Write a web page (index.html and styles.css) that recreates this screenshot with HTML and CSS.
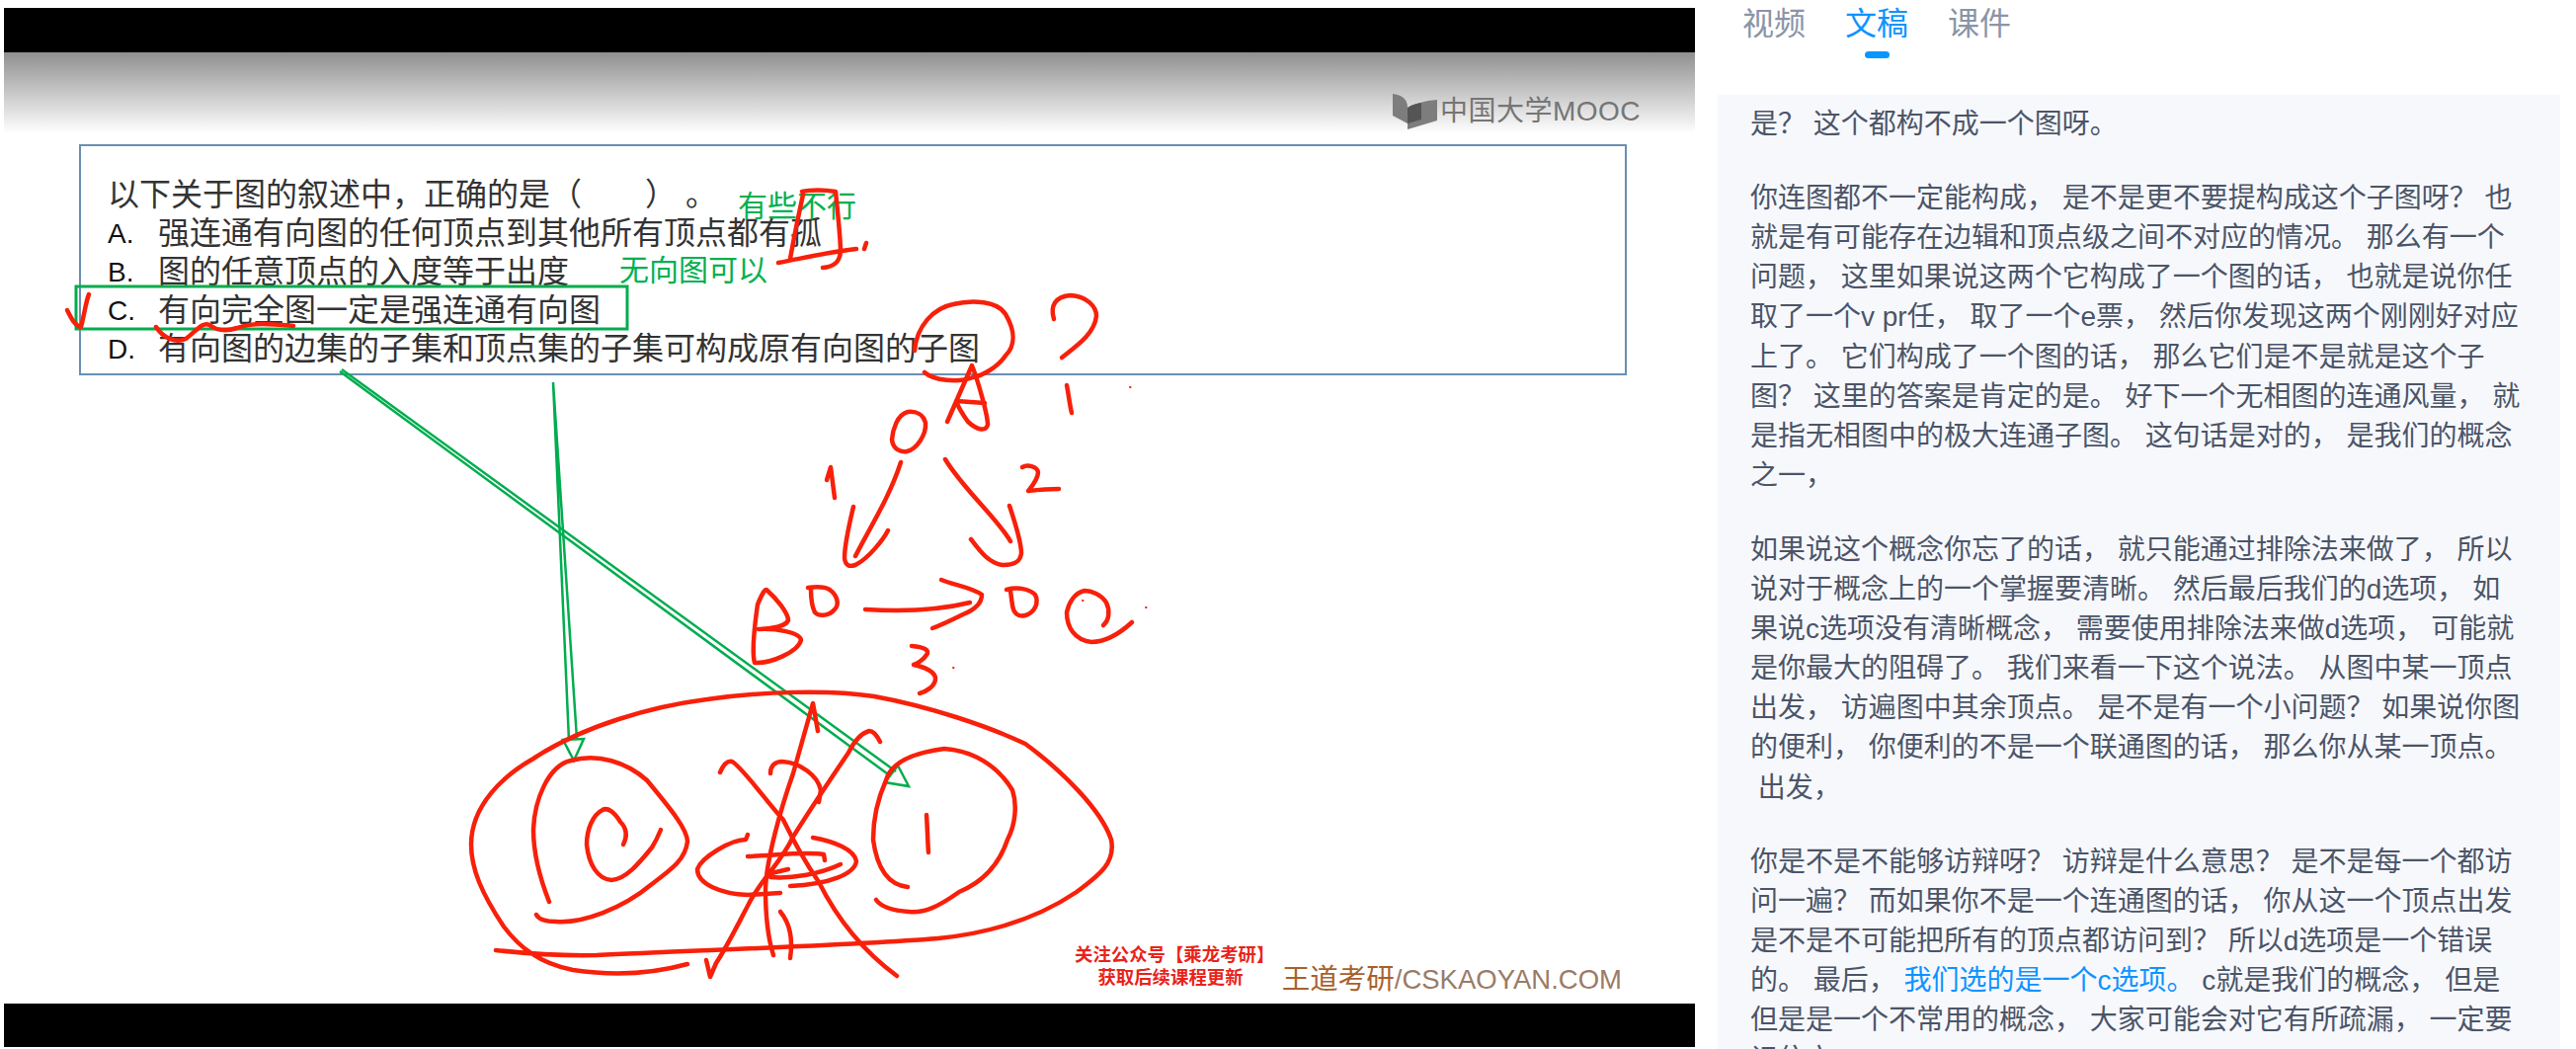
FILE: index.html
```html
<!DOCTYPE html>
<html lang="zh-CN">
<head>
    <meta charset="UTF-8">
    <meta name="viewport" content="width=device-width, initial-scale=1.0">
    <title>文稿</title>
    <link rel="stylesheet" href="styles.css">
</head>
<body>
    <div class="player">
        <div class="video">
            <div class="bar-top"></div>
            <div class="stage">
                <div class="question">
                    <p class="stem">以下关于图的叙述中，正确的是（&emsp;&emsp;）&nbsp;。</p>
                    <p class="option"><span class="option-key">A.</span>强连通有向图的任何顶点到其他所有顶点都有孤</p>
                    <p class="option"><span class="option-key">B.</span>图的任意顶点的入度等于出度</p>
                    <p class="option"><span class="option-key">C.</span>有向完全图一定是强连通有向图</p>
                    <p class="option"><span class="option-key">D.</span>有向图的边集的子集和顶点集的子集可构成原有向图的子图</p>
                </div>
            </div>
            <div class="bar-bottom"></div>

            <div class="logo">
                <svg class="logo-icon" width="45" height="36" viewBox="0 0 45 36">
                    <path d="M0 0 C8 1 15 4 15 14 L15 30 L0 22 Z" fill="#7d7d7d"/>
                    <path d="M15 14 C22 10 32 7 45 6 L45 27 L15 36 Z" fill="#7d7d7d"/>
                    <path d="M15 14 C18 12 22 10 29 9 L29 26 L15 30 Z" fill="#555"/>
                </svg>
                <span class="logo-text">中国大学MOOC</span>
            </div>

            <div class="note note-some">有些不行</div>
            <div class="note note-undirected">无向图可以</div>

            <div class="promo">关注公众号【乘龙考研】<br>获取后续课程更新</div>
            <div class="site"><span class="site-name">王道考研</span>/CSKAOYAN.COM</div>

            <svg class="ink" width="1712" height="1052" viewBox="4 8 1712 1052">
                <g class="ink-green">
                    <rect x="77" y="290" width="558" height="43"/>
                    <path class="thin" d="M344 376 L902 786 M346 374 L907 781 M909 775 L920 796 L896 792 Z"/>
                    <path class="thin" d="M560 387 L576 750 M560 387 L584 748 M570 749 L581 770 L591 748 Z"/>
                </g>
                <g class="ink-red">
                    <!-- marks on the options -->
                    <path d="M813 197 C808 220 803 245 800 262 M812 194 C820 192 835 192 846 194 C848 215 851 240 851 255 C850 265 845 270 833 271 M788 266 C810 262 840 255 867 252 M875 252 L877 246"/>
                    <path d="M68 314 C72 322 76 330 82 331 C85 320 87 305 90 298"/>
                    <path d="M158 331 C165 342 178 348 188 343 C198 336 205 325 212 329 C220 335 228 336 240 332 C255 326 275 328 297 330"/>
                    <path d="M926 355 C928 330 945 312 965 308 C985 303 1010 305 1018 318 C1028 335 1028 350 1018 360 C1010 372 995 380 985 382 C970 388 945 385 936 377"/>
                    <path d="M1067 323 C1063 310 1068 300 1084 299 C1100 300 1110 310 1110 320 C1108 338 1090 350 1075 362"/>
                    <path d="M1080 390 C1082 400 1083 410 1085 418"/>

                    <!-- small graph -->
                    <path d="M959 427 L984 370 C990 385 1000 420 1000 430 C998 437 990 436 980 427 C975 420 970 412 968 406 L997 408"/>
                    <path d="M919 417 C908 420 904 435 903 445 C904 455 912 458 918 457 C928 455 938 440 937 428 C935 420 928 416 919 417 Z"/>
                    <path d="M837 486 L841 473 L845 504"/>
                    <path d="M912 468 C900 505 880 535 866 563 M864 513 C860 530 855 550 855 565 C856 573 860 574 866 572 C880 565 895 545 899 537"/>
                    <path d="M957 465 C975 495 1010 525 1023 548 M1022 512 C1028 530 1034 550 1034 560 C1033 570 1025 572 1015 572 C1000 570 990 555 983 546"/>
                    <path d="M1035 473 C1040 470 1050 472 1051 478 C1051 485 1045 492 1041 497 C1050 496 1060 495 1072 495"/>
                    <path d="M767 612 C763 640 761 660 764 671 C780 672 808 660 811 648 C810 640 785 636 768 637 C780 636 795 635 798 628 C798 620 785 605 777 598 C775 595 772 600 767 612"/>
                    <path d="M818 595 C825 594 835 594 840 597 C848 603 850 612 845 617 C840 623 830 625 825 620 C821 612 821 604 821 597"/>
                    <path d="M876 617 C910 619 950 618 982 610 M953 587 C965 592 985 595 994 602 C994 612 985 618 975 622 C965 627 955 632 944 636"/>
                    <path d="M1019 597 C1030 594 1042 596 1048 602 C1052 610 1048 620 1038 623 C1030 625 1026 620 1025 613 L1023 598"/>
                    <path d="M1117 633 C1123 628 1124 618 1120 610 C1115 602 1105 598 1098 598 C1088 600 1082 610 1080 620 C1080 635 1088 648 1105 650 C1120 650 1135 640 1146 630"/>
                    <path d="M923 654 C935 655 942 658 938 663 C935 668 928 672 925 673 C935 675 948 680 947 688 C946 695 938 700 931 702"/>

                    <!-- big loop -->
                    <path d="M696 976 C660 986 620 988 580 982 C545 975 525 958 510 938 C488 905 477 880 477 855 C477 815 510 785 540 768 C590 735 660 715 716 708 C770 700 840 698 885 705 C940 715 1000 735 1038 753 C1075 780 1115 820 1125 850 C1130 875 1110 888 1090 903 C1050 930 1000 945 950 950 C850 958 700 962 604 967 C560 968 530 965 502 962"/>
                    <path d="M556 913 C545 885 540 860 540 840 C541 810 555 775 578 770 C605 762 635 772 655 790 C680 820 696 840 696 852 C694 870 680 880 660 895 C630 920 590 935 563 933 C552 933 545 930 543 926"/>
                    <path d="M631 855 C636 845 634 838 628 832 C622 822 615 817 610 820 C600 825 594 840 594 855 C596 875 605 890 619 891 C635 890 650 870 660 858 C665 850 667 845 669 840"/>
                    <path d="M919 898 C900 896 888 880 884 850 C884 830 888 810 897 790 C902 772 925 762 956 758 C985 760 1010 775 1025 800 C1030 815 1028 835 1020 850 C1010 880 990 895 971 903 C950 918 935 925 920 923 C905 922 892 918 887 911"/>
                    <path d="M938 825 C939 838 939 850 940 863"/>

                    <!-- crossed out middle node -->
                    <path d="M729 782 C732 775 736 770 741 771 C750 775 775 810 793 830 C810 865 820 880 829 893 C845 925 870 960 908 988"/>
                    <path d="M891 751 C888 745 884 740 880 740 C873 742 865 750 859 762 C840 790 820 820 803 847 C790 875 770 890 757 917 C745 940 735 960 725 975 L719 989 L715 972"/>
                    <path d="M783 967 C776 945 775 920 775 900 C776 870 790 820 803 783 L823 712 L828 740"/>
                    <path d="M780 783 C780 775 785 771 792 771 C810 772 828 785 831 800 L829 812"/>
                    <path d="M757 845 L755 850 C740 850 710 868 706 880 C706 895 730 905 757 906 L790 904"/>
                    <path d="M823 848 C845 852 865 860 867 872 C865 885 840 895 800 897"/>
                    <path d="M757 867 C785 866 815 862 834 865 L835 871"/>
                    <path d="M780 888 C800 890 830 885 851 875 M777 885 L798 880"/>
                    <path d="M790 923 C800 935 803 950 800 970"/>
                    <path class="dot" d="M1144 392 h.5 M1096 608 h.5 M1160 615 h.5 M965 676 h.5"/>
                </g>
            </svg>
        </div>
    </div>

    <div class="side">
        <div class="tabs">
            <div class="tab">视频</div>
            <div class="tab tab-active">文稿<span class="tab-mark"></span></div>
            <div class="tab">课件</div>
        </div>
        <div class="transcript">
            <div class="transcript-body">
                <p><span class="line-cut">比如说这个边集里面的这条边它连的顶点不在这里， 是不是不对的</span>是？ 这个都构不成一个图呀。</p>
                <p>你连图都不一定能构成， 是不是更不要提构成这个子图呀？ 也<br>就是有可能存在边辑和顶点级之间不对应的情况。 那么有一个<br>问题， 这里如果说这两个它构成了一个图的话， 也就是说你任<br>取了一个v pr任， 取了一个e票， 然后你发现这两个刚刚好对应<br>上了。 它们构成了一个图的话， 那么它们是不是就是这个子<br>图？ 这里的答案是肯定的是。 好下一个无相图的连通风量， 就<br>是指无相图中的极大连通子图。 这句话是对的， 是我们的概念<br>之一，</p>
                <p>如果说这个概念你忘了的话， 就只能通过排除法来做了， 所以<br>说对于概念上的一个掌握要清晰。 然后最后我们的d选项， 如<br>果说c选项没有清晰概念， 需要使用排除法来做d选项， 可能就<br>是你最大的阻碍了。 我们来看一下这个说法。 从图中某一顶点<br>出发， 访遍图中其余顶点。 是不是有一个小问题？ 如果说你图<br>的便利， 你便利的不是一个联通图的话， 那么你从某一顶点。<br>&nbsp;出发，</p>
                <p>你是不是不能够访辩呀？ 访辩是什么意思？ 是不是每一个都访<br>问一遍？ 而如果你不是一个连通图的话， 你从这一个顶点出发<br>是不是不可能把所有的顶点都访问到？ 所以d选项是一个错误<br>的。 最后， <span class="hl">我们选的是一个c选项。</span> c就是我们的概念， 但是<br>但是是一个不常用的概念， 大家可能会对它有所疏漏， 一定要<br>记住它</p>
            </div>
        </div>
    </div>
</body>
</html>
```

FILE: styles.css
```css
* {
    box-sizing: border-box;
}

html, body {
    height: 100%;
}

body {
    margin: 0;
    display: flex;
    overflow: hidden;
    background-color: #fff;
    font-family: "Liberation Sans", "Noto Sans CJK SC", sans-serif;
}

p {
    margin: 0;
}

/* left: video frame */
.player {
    width: 1716px;
    flex-shrink: 0;
    padding: 8px 0 2px 4px;
    height: 1062px;
}

.video {
    position: relative;
    height: 100%;
    display: flex;
    flex-direction: column;
}

.bar-top {
    height: 45px;
    background-color: #000;
}

.bar-bottom {
    height: 44px;
    background-color: #000;
}

.stage {
    flex: 1;
    padding: 93px 0 0 76px;
    background: #fff linear-gradient(#909090, #fff) no-repeat top / 100% 82px;
}

.question {
    width: 1567px;
    height: 234px;
    padding: 30px 0 0 27px;
    border: 2px solid #6a8fb3;
    background-color: #fff;
    color: #333;
    font-size: 32px;
    line-height: 39px;
}

.option {
    display: flex;
    white-space: nowrap;
}

.option-key {
    width: 51px;
    color: #111;
    font-size: 28px;
}

.logo {
    position: absolute;
    top: 87px;
    right: 55px;
    display: flex;
    align-items: center;
    gap: 3px;
}

.logo-text {
    color: #757575;
    font-size: 28px;
    line-height: 36px;
    letter-spacing: 0.5px;
}

.note {
    position: absolute;
    color: #00b050;
    font-size: 30px;
    line-height: 30px;
    white-space: nowrap;
}

.note-some {
    left: 743px;
    top: 186px;
}

.note-undirected {
    left: 623px;
    top: 251px;
}

.promo {
    position: absolute;
    left: 1084px;
    top: 947px;
    width: 194px;
    color: #e9231a;
    font-size: 18.4px;
    font-weight: bold;
    line-height: 23px;
    text-align: center;
    white-space: nowrap;
}

.site {
    position: absolute;
    right: 74px;
    top: 965px;
    color: #9b7b66;
    font-size: 27.5px;
    line-height: 36px;
    white-space: nowrap;
}

.site-name {
    color: #a9602c;
    font-size: 28.5px;
}

/* hand-drawn marks over the slide */
.ink {
    position: absolute;
    left: 0;
    top: 0;
    pointer-events: none;
    fill: none;
}

.ink-green {
    stroke: #00ad4f;
    stroke-width: 3;
}

.ink-green .thin {
    stroke-width: 2.5;
}

.ink-red {
    stroke: #f8200a;
    stroke-width: 4.5;
    stroke-linecap: round;
    stroke-linejoin: round;
}

.ink-red .dot {
    stroke-width: 2;
}

/* right: tabs and transcript */
.side {
    flex: 1;
    min-width: 0;
    padding-left: 23px;
    padding-right: 16px;
    display: flex;
    flex-direction: column;
}

.tabs {
    height: 96px;
    flex-shrink: 0;
    padding-left: 25px;
    display: flex;
    gap: 40px;
}

.tab {
    color: #8a94a6;
    font-size: 32px;
    line-height: 49px;
    display: flex;
    flex-direction: column;
    align-items: center;
}

.tab-active {
    color: #0e93ff;
}

.tab-mark {
    width: 25px;
    height: 7px;
    margin-top: 3px;
    border-radius: 4px;
    background-color: #0a96ff;
}

.transcript {
    flex: 1;
    min-height: 0;
    overflow: hidden;
    padding: 0 33px;
    background-color: #f7f8fc;
}

.transcript-body {
    margin-top: -33px;
    color: #4b5568;
    font-size: 28px;
    line-height: 40.1px;
    white-space: nowrap;
}

.transcript-body p {
    margin-bottom: 35px;
}

/* line scrolled almost out of the panel */
.line-cut {
    display: block;
    margin-bottom: 3px;
}

.hl {
    color: #0e93ff;
}
```
